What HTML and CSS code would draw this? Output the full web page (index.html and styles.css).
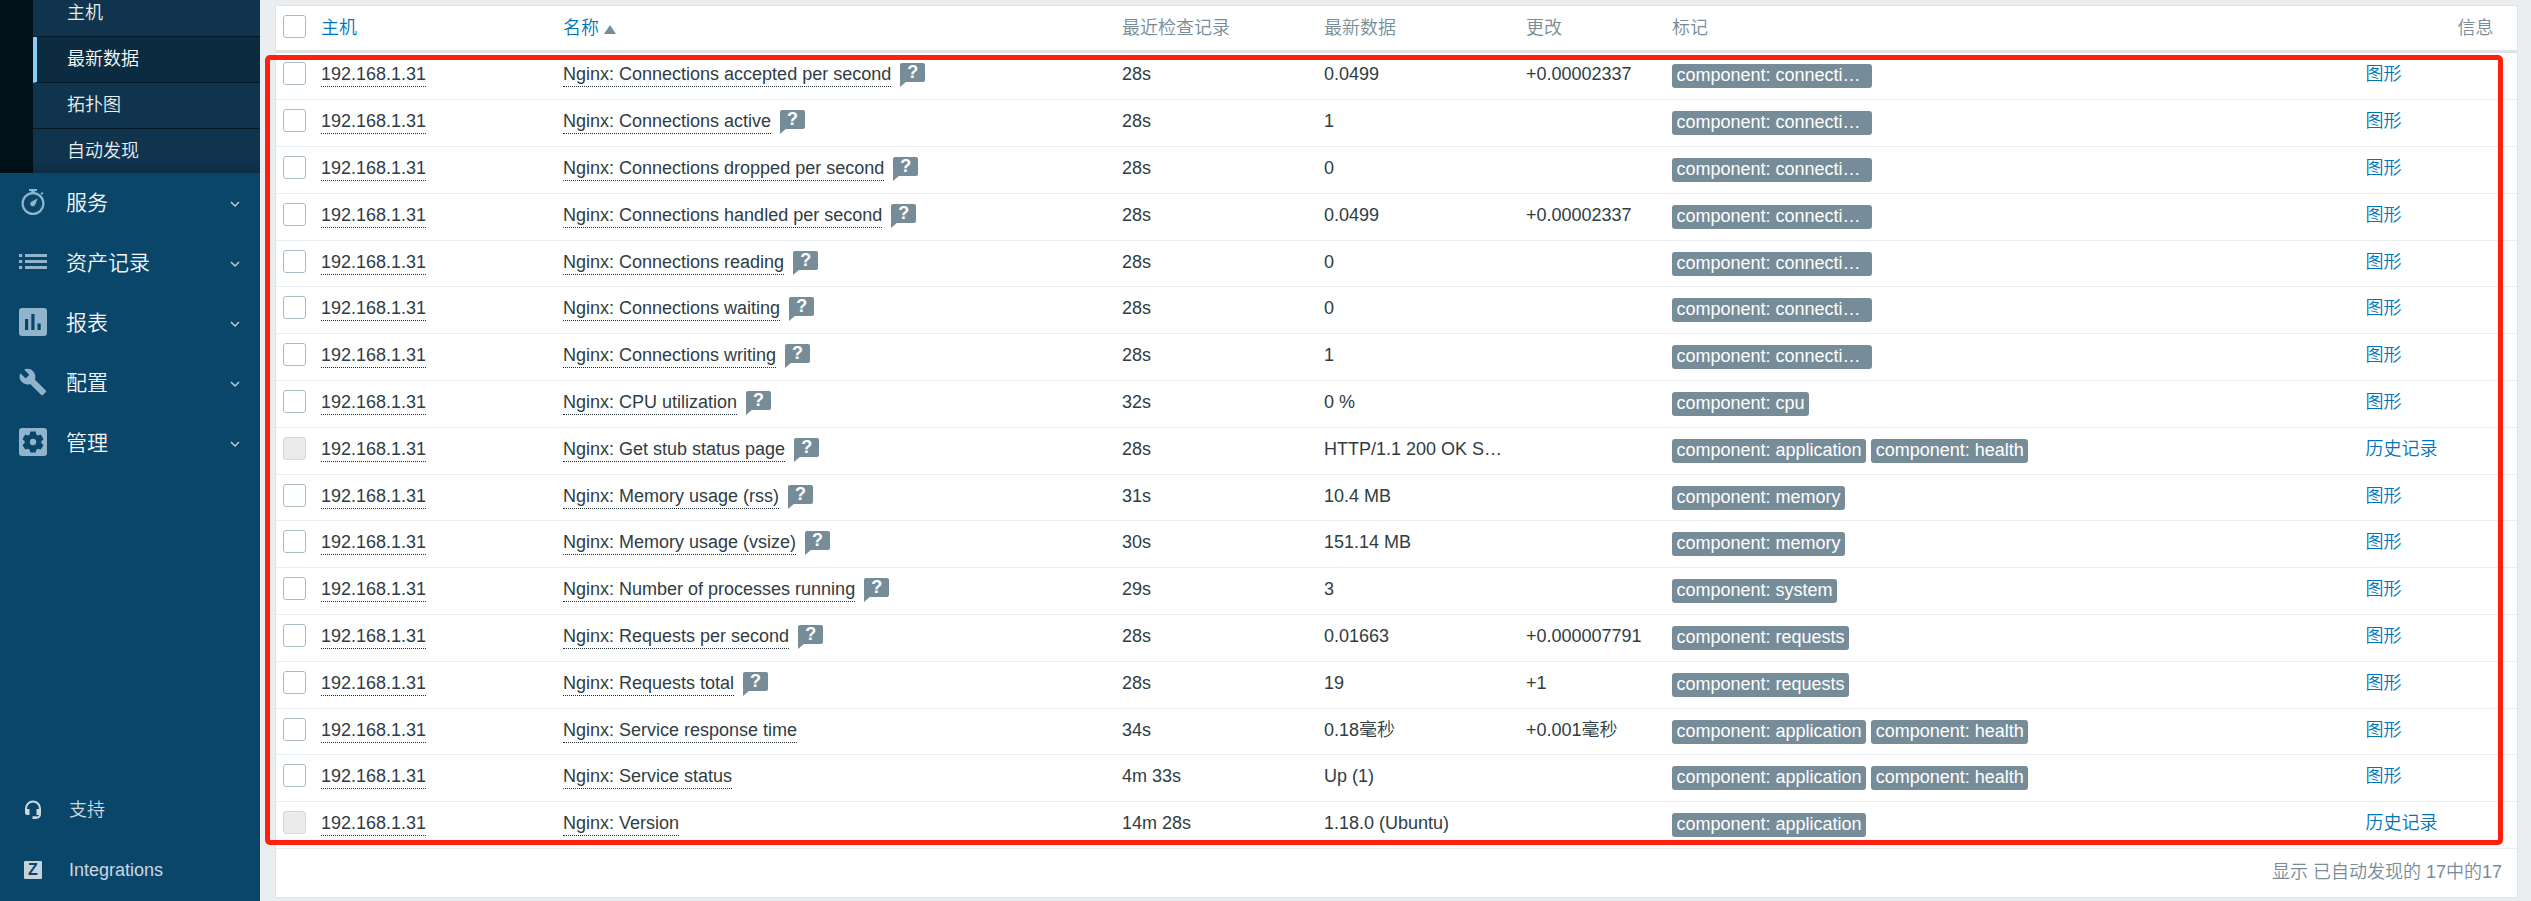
FILE: index.html
```html
<!DOCTYPE html>
<html lang="zh-CN">
<head>
<meta charset="utf-8">
<title>最新数据</title>
<link rel="stylesheet" href="styles.css">
</head>
<body>
<aside class="sidebar">
  <ul class="submenu">
    <li>主机</li>
    <li class="active">最新数据</li>
    <li>拓扑图</li>
    <li>自动发现</li>
  </ul>
  <ul class="menu">
    <li>
      <svg class="icon" viewBox="0 0 28 28"><circle cx="14" cy="15.500" r="10.400" fill="none" stroke="currentColor" stroke-width="2.200"/><path d="M10 1h8v2h-2.200v2.500h-3.600V3H10zM21.500 5.600l1.600-1.700 1.400 1.300-1.600 1.700zM18.600 10.400l-2.300 6.200a2.600 2.600 0 1 1-3.700-3.200z" fill="currentColor"/></svg>
      <span>服务</span>
      <svg class="chevron" viewBox="0 0 10 7"><path d="M1 1l4 4 4-4"/></svg>
    </li>
    <li>
      <svg class="icon" viewBox="0 0 28 28"><path d="M0 6h3.200v3H0zM6 6h22v3H6zM0 12h3.200v3H0zM6 12h22v3H6zM0 18h3.200v3H0zM6 18h22v3H6z" fill="currentColor"/></svg>
      <span>资产记录</span>
      <svg class="chevron" viewBox="0 0 10 7"><path d="M1 1l4 4 4-4"/></svg>
    </li>
    <li>
      <svg class="icon" viewBox="0 0 28 28"><path fill-rule="evenodd" d="M3 0h22a3 3 0 0 1 3 3v22a3 3 0 0 1-3 3H3a3 3 0 0 1-3-3V3a3 3 0 0 1 3-3zM6 11v11h3.200V11zM12.300 6v16h3.200V6zM18.500 15.500V22h3.200v-6.500z" fill="currentColor"/></svg>
      <span>报表</span>
      <svg class="chevron" viewBox="0 0 10 7"><path d="M1 1l4 4 4-4"/></svg>
    </li>
    <li>
      <svg class="icon" viewBox="0.500 1 23.200 22"><path d="M22.700 19l-9.100-9.100c.9-2.300.4-5-1.500-6.900-2-2-5-2.400-7.400-1.300L9 6 6 9 1.600 4.700C.4 7.100.9 10.100 2.900 12.100c1.900 1.900 4.600 2.400 6.900 1.500l9.100 9.100c.4.4 1 .4 1.400 0l2.300-2.300c.5-.4.500-1.100.1-1.400z" fill="currentColor"/></svg>
      <span>配置</span>
      <svg class="chevron" viewBox="0 0 10 7"><path d="M1 1l4 4 4-4"/></svg>
    </li>
    <li>
      <svg class="icon" viewBox="0 0 28 28"><path fill-rule="evenodd" d="M3 0h22a3 3 0 0 1 3 3v22a3 3 0 0 1-3 3H3a3 3 0 0 1-3-3V3a3 3 0 0 1 3-3zM11.300 3.600l-.6 2.900-1.700 1-2.800-.9-2.700 4.600 2.200 2v1.800l-2.200 2 2.700 4.600 2.800-.9 1.700 1 .6 2.900h5.400l.6-2.900 1.700-1 2.800.9 2.700-4.600-2.200-2v-1.800l2.200-2-2.700-4.600-2.800.9-1.700-1-.6-2.900z" fill="currentColor"/><circle cx="14" cy="14" r="3.200" fill="currentColor"/></svg>
      <span>管理</span>
      <svg class="chevron" viewBox="0 0 10 7"><path d="M1 1l4 4 4-4"/></svg>
    </li>
  </ul>
  <ul class="user-menu">
    <li>
      <svg class="headset" viewBox="0 0 18 20"><path d="M2 11V8.500a7 7 0 0 1 14 0V14c0 2.500-1.500 3.800-4 3.800h-1.500" fill="none" stroke="currentColor" stroke-width="2"/><path d="M1 9h4.500v6H3a2 2 0 0 1-2-2zM12.500 9H17v5l-2 1h-2.500zM8.500 16.300h3.800v2.700H8.500z" fill="currentColor"/></svg>
      <span>支持</span>
    </li>
    <li><b class="z-logo">Z</b><span>Integrations</span></li>
  </ul>
</aside>
<main class="content">
  <section class="card">
    <div class="row head">
      <i class="check"></i><a>主机</a><a class="sorted">名称<i class="arrow"></i></a><span>最近检查记录</span><span>最新数据</span><span>更改</span><span>标记</span><span></span><span class="info">信息</span>
    </div>
    <div class="row"><i class="check"></i><a class="dot">192.168.1.31</a><div class="name"><a class="dot">Nginx: Connections accepted per second</a><b class="help">?</b></div><span>28s</span><span>0.0499</span><span>+0.00002337</span><div class="tags"><em>component: connections</em></div><a>图形</a></div>
    <div class="row"><i class="check"></i><a class="dot">192.168.1.31</a><div class="name"><a class="dot">Nginx: Connections active</a><b class="help">?</b></div><span>28s</span><span>1</span><span></span><div class="tags"><em>component: connections</em></div><a>图形</a></div>
    <div class="row"><i class="check"></i><a class="dot">192.168.1.31</a><div class="name"><a class="dot">Nginx: Connections dropped per second</a><b class="help">?</b></div><span>28s</span><span>0</span><span></span><div class="tags"><em>component: connections</em></div><a>图形</a></div>
    <div class="row"><i class="check"></i><a class="dot">192.168.1.31</a><div class="name"><a class="dot">Nginx: Connections handled per second</a><b class="help">?</b></div><span>28s</span><span>0.0499</span><span>+0.00002337</span><div class="tags"><em>component: connections</em></div><a>图形</a></div>
    <div class="row"><i class="check"></i><a class="dot">192.168.1.31</a><div class="name"><a class="dot">Nginx: Connections reading</a><b class="help">?</b></div><span>28s</span><span>0</span><span></span><div class="tags"><em>component: connections</em></div><a>图形</a></div>
    <div class="row"><i class="check"></i><a class="dot">192.168.1.31</a><div class="name"><a class="dot">Nginx: Connections waiting</a><b class="help">?</b></div><span>28s</span><span>0</span><span></span><div class="tags"><em>component: connections</em></div><a>图形</a></div>
    <div class="row"><i class="check"></i><a class="dot">192.168.1.31</a><div class="name"><a class="dot">Nginx: Connections writing</a><b class="help">?</b></div><span>28s</span><span>1</span><span></span><div class="tags"><em>component: connections</em></div><a>图形</a></div>
    <div class="row"><i class="check"></i><a class="dot">192.168.1.31</a><div class="name"><a class="dot">Nginx: CPU utilization</a><b class="help">?</b></div><span>32s</span><span>0 %</span><span></span><div class="tags"><em>component: cpu</em></div><a>图形</a></div>
    <div class="row"><i class="check disabled"></i><a class="dot">192.168.1.31</a><div class="name"><a class="dot">Nginx: Get stub status page</a><b class="help">?</b></div><span>28s</span><span>HTTP/1.1 200 OK S…</span><span></span><div class="tags"><em>component: application</em><em>component: health</em></div><a>历史记录</a></div>
    <div class="row"><i class="check"></i><a class="dot">192.168.1.31</a><div class="name"><a class="dot">Nginx: Memory usage (rss)</a><b class="help">?</b></div><span>31s</span><span>10.4 MB</span><span></span><div class="tags"><em>component: memory</em></div><a>图形</a></div>
    <div class="row"><i class="check"></i><a class="dot">192.168.1.31</a><div class="name"><a class="dot">Nginx: Memory usage (vsize)</a><b class="help">?</b></div><span>30s</span><span>151.14 MB</span><span></span><div class="tags"><em>component: memory</em></div><a>图形</a></div>
    <div class="row"><i class="check"></i><a class="dot">192.168.1.31</a><div class="name"><a class="dot">Nginx: Number of processes running</a><b class="help">?</b></div><span>29s</span><span>3</span><span></span><div class="tags"><em>component: system</em></div><a>图形</a></div>
    <div class="row"><i class="check"></i><a class="dot">192.168.1.31</a><div class="name"><a class="dot">Nginx: Requests per second</a><b class="help">?</b></div><span>28s</span><span>0.01663</span><span>+0.000007791</span><div class="tags"><em>component: requests</em></div><a>图形</a></div>
    <div class="row"><i class="check"></i><a class="dot">192.168.1.31</a><div class="name"><a class="dot">Nginx: Requests total</a><b class="help">?</b></div><span>28s</span><span>19</span><span>+1</span><div class="tags"><em>component: requests</em></div><a>图形</a></div>
    <div class="row"><i class="check"></i><a class="dot">192.168.1.31</a><div class="name"><a class="dot">Nginx: Service response time</a></div><span>34s</span><span>0.18毫秒</span><span>+0.001毫秒</span><div class="tags"><em>component: application</em><em>component: health</em></div><a>图形</a></div>
    <div class="row"><i class="check"></i><a class="dot">192.168.1.31</a><div class="name"><a class="dot">Nginx: Service status</a></div><span>4m 33s</span><span>Up (1)</span><span></span><div class="tags"><em>component: application</em><em>component: health</em></div><a>图形</a></div>
    <div class="row"><i class="check disabled"></i><a class="dot">192.168.1.31</a><div class="name"><a class="dot">Nginx: Version</a></div><span>14m 28s</span><span>1.18.0 (Ubuntu)</span><span></span><div class="tags"><em>component: application</em></div><a>历史记录</a></div>
    <div class="footer">显示 已自动发现的 17中的17</div>
  </section>
  <div class="highlight"></div>
</main>
</body>
</html>
```
FILE: styles.css
```css
* { box-sizing: border-box; }
html { height: 901px; overflow: hidden; }
body {
  margin: 0;
  display: flex;
  height: 901px;
  overflow: hidden;
  background: #ebeef0;
  color: #303c43;
  font: 350 18px/21px "Liberation Sans", "Noto Sans CJK SC", sans-serif;
}
ul { list-style: none; margin: 0; padding: 0; }
i, em { font-style: normal; }

.sidebar {
  width: 260px;
  flex: none;
  display: flex;
  flex-direction: column;
  background: #0a466a;
}
.submenu {
  height: 173px;
  padding-left: 33px;
  background: #02121b;
  color: #e9eef1;
  box-shadow: inset 0 -12px 10px -10px #020d14;
}
.submenu li {
  height: 46px;
  padding-left: 34px;
  border-bottom: 1px solid #051823;
  background: #10344d;
  line-height: 44px;
}
.submenu li:first-child { height: 37px; line-height: 26px; }
.submenu li:last-child {
  height: 44px;
  border: 0;
  background: linear-gradient(#10344d 75%, #0d2c41);
}
.submenu .active {
  padding-left: 30px;
  border-left: 4px solid #86d0ff;
  background: #0b2c40;
  color: #fff;
}

.menu { flex: 1; color: #8fb4cc; }
.menu li {
  height: 60px;
  display: flex;
  align-items: center;
  padding: 0 20px 0 19px;
  font-size: 21px;
}
.menu span { flex: 1; margin: -2px 0 0 19px; color: #f4f7f9; }
.icon { width: 28px; height: 28px; margin-top: -2px; }
.chevron { width: 10px; height: 7px; margin-top: 3px; }
.chevron path { fill: none; stroke: #b9ccd8; stroke-width: 1.5; }

.user-menu { color: #ccd8e0; }
.user-menu li { height: 60px; display: flex; align-items: center; padding: 0 0 2px 24px; }
.user-menu span { margin-left: 27px; }
.headset { width: 18px; height: 20px; }
.z-logo {
  width: 18px;
  height: 18px;
  border-radius: 1px;
  background: #c5d3dd;
  color: #0a466a;
  font-size: 16px;
  font-weight: 700;
  line-height: 18px;
  text-align: center;
}

.content { flex: 1; position: relative; padding: 5px 13px 0 15px; }
.card { height: 893px; border: 1px solid #dfe4e7; background: #fff; }
.row {
  height: 46.8125px;
  display: grid;
  grid-template-columns: 38px 242px 559px 202px 202px 146px 693.5px 92px auto;
  padding: 9px 0 0 7px;
  border-bottom: 1px solid #ebeef0;
  white-space: nowrap;
}
.row > * { justify-self: start; height: 21px; margin-top: 2px; }
.row a { color: #0275b8; }
.row.head { height: 47.250px; border-bottom: 3px solid #dce2e5; color: #768d99; }
.row.head > * { margin-top: 3px; }
.row .check,
.row.head .check {
  width: 23px;
  height: 23px;
  margin-top: 0;
  border: 1px solid #acbbc2;
  border-radius: 3px;
  background: #fff;
}
.row .disabled { border-color: #d2d9dc; background: #ebebeb; }
.row .dot { height: 23px; border-bottom: 1px dotted #1f2c33; color: #303c43; }
.sorted { display: flex; align-items: center; gap: 5px; }
.arrow {
  border: 6px solid transparent;
  border-top: 0;
  border-bottom: 9px solid #768d99;
  margin-top: 2px;
}
.name { display: flex; gap: 9px; }
.help {
  position: relative;
  width: 25px;
  height: 19px;
  margin-top: -1px;
  border-radius: 2px;
  background: #768d99;
  color: #fff;
  font-size: 18px;
  font-weight: 700;
  line-height: 19px;
  text-align: center;
}
.help::after {
  content: "";
  position: absolute;
  left: 0;
  top: 18px;
  border-top: 6px solid #768d99;
  border-right: 7px solid transparent;
}
.row .tags { display: flex; gap: 5px; height: 24px; }
.tags em {
  max-width: 200px;
  padding: 0 4.500px;
  border-radius: 3px;
  background: #768d99;
  color: #fff;
  line-height: 23px;
  overflow: hidden;
  text-overflow: ellipsis;
}
.footer { padding: 13px 15px 0 0; color: #768d99; text-align: right; }

/* Red annotation frame drawn over the table */
.highlight {
  position: absolute;
  left: 5px;
  top: 55px;
  width: 2238px;
  height: 790px;
  border: 5px solid #ff1e10;
  border-radius: 5px;
}
```
